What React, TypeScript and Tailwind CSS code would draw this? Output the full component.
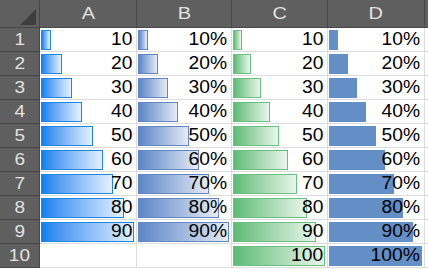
import React from "react";

type Column = {
  key: string;
  width: number;
  max: number;
  percent: boolean;
  bar: string;
  values: (number | null)[];
};

// data bar styles per column: gradient with outline, or flat fill
const COLUMNS: Column[] = [
  {
    key: "A",
    width: 97,
    max: 90,
    percent: false,
    bar: "bg-linear-to-r from-[#0581ec] to-[#e4f1fd] border border-[#1f86e0]",
    values: [10, 20, 30, 40, 50, 60, 70, 80, 90, null],
  },
  {
    key: "B",
    width: 95,
    max: 90,
    percent: true,
    bar: "bg-linear-to-r from-[#5c86c6] to-[#e6ebf5] border border-[#6186c2]",
    values: [10, 20, 30, 40, 50, 60, 70, 80, 90, null],
  },
  {
    key: "C",
    width: 96,
    max: 100,
    percent: false,
    bar: "bg-linear-to-r from-[#5dbb77] to-[#e8f6ec] border border-[#69bf80]",
    values: [10, 20, 30, 40, 50, 60, 70, 80, 90, 100],
  },
  {
    key: "D",
    width: 97,
    max: 100,
    percent: true,
    bar: "bg-[#638ec6]",
    values: [10, 20, 30, 40, 50, 60, 70, 80, 90, 100],
  },
];

const ROWS = [1, 2, 3, 4, 5, 6, 7, 8, 9, 10];

function Cell({ col, value }: { col: Column; value: number | null }) {
  const barWidth = value === null ? 0 : Math.round((value / col.max) * (col.width - 4));
  return (
    <div className="relative h-[24px] border-b border-r border-[#dcdcdc] bg-white">
      {value !== null && (
        <>
          <div className={`absolute left-[1px] top-[2px] bottom-[1px] ${col.bar}`} style={{ width: barWidth }} />
          <div className="relative flex h-full items-center justify-end pr-[4px] text-[17.5px] leading-none text-black">
            <span className="inline-block origin-right scale-x-[1.1]">
              {value}
              {col.percent ? "%" : ""}
            </span>
          </div>
        </>
      )}
    </div>
  );
}

export default function App() {
  return (
    <div
      className="h-[269px] w-[428px] overflow-hidden bg-white"
      style={{ fontFamily: '"Liberation Sans", Arial, sans-serif' }}
    >
      <div className="grid grid-cols-[40px_97px_95px_96px_97px_1fr]">
        {/* header row */}
        <div className="relative h-[28px] border-b border-r border-[#474747] bg-[#5f5f5f]">
          <svg className="absolute left-[20px] top-[9px]" width="16" height="16" viewBox="0 0 16 16">
            <polygon points="16,0 16,16 0,16" fill="#3e3e3e" />
          </svg>
        </div>
        {COLUMNS.map((col) => (
          <div
            key={col.key}
            className="flex h-[28px] items-center justify-center border-b border-r border-[#474747] bg-[#5f5f5f] text-[16px] text-[#e2e2e2]"
          >
            <span className="inline-block scale-x-[1.25]">{col.key}</span>
          </div>
        ))}
        <div className="h-[28px] border-b border-[#474747] bg-[#5f5f5f]" />

        {ROWS.map((r, i) => (
          <React.Fragment key={r}>
            <div className="flex h-[24px] items-center justify-center border-b border-r border-[#474747] bg-[#5f5f5f] text-[17px] text-[#e2e2e2]">
              <span className="inline-block scale-x-[1.12]">{r}</span>
            </div>
            {COLUMNS.map((col) => (
              <Cell key={col.key} col={col} value={col.values[i]} />
            ))}
            <div className="h-[24px] border-b border-[#dcdcdc] bg-white" />
          </React.Fragment>
        ))}
      </div>
    </div>
  );
}
